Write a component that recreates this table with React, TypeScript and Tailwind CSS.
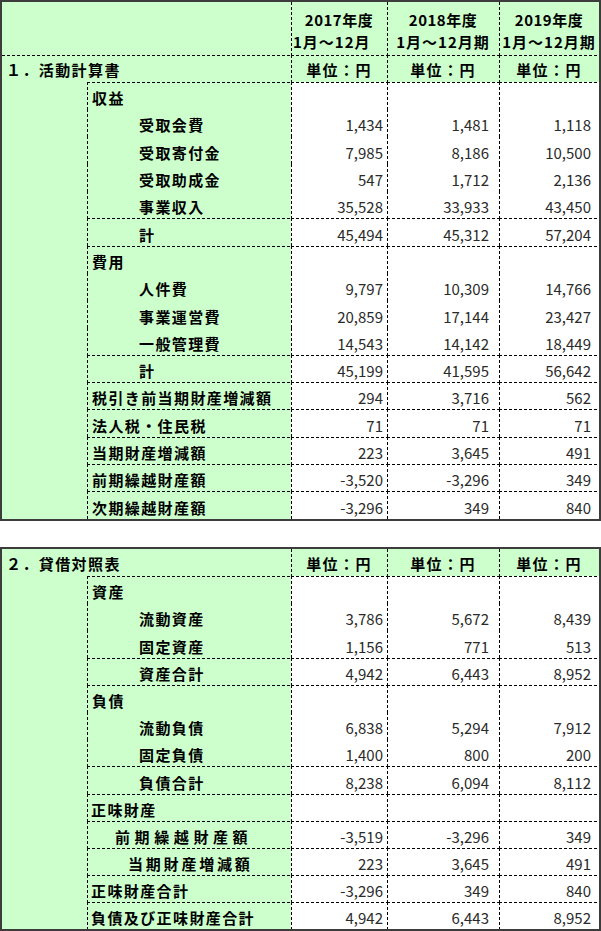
import React from 'react'

type Row = {
  label: string
  pad: string
  vals?: string[]
  line?: boolean
}

const activity: Row[] = [
  { label: '収益', pad: 'pl-[5px] tracking-[1.4px]', line: true },
  { label: '受取会費', pad: 'pl-[52px] tracking-[1.4px]', vals: ['1,434', '1,481', '1,118'] },
  { label: '受取寄付金', pad: 'pl-[52px] tracking-[1.4px]', vals: ['7,985', '8,186', '10,500'] },
  { label: '受取助成金', pad: 'pl-[52px] tracking-[1.4px]', vals: ['547', '1,712', '2,136'] },
  { label: '事業収入', pad: 'pl-[52px] tracking-[1.4px]', vals: ['35,528', '33,933', '43,450'] },
  { label: '計', pad: 'pl-[52px] tracking-[1.4px]', vals: ['45,494', '45,312', '57,204'], line: true },
  { label: '費用', pad: 'pl-[5px] tracking-[1.4px]', line: true },
  { label: '人件費', pad: 'pl-[52px] tracking-[1.4px]', vals: ['9,797', '10,309', '14,766'] },
  { label: '事業運営費', pad: 'pl-[52px] tracking-[1.4px]', vals: ['20,859', '17,144', '23,427'] },
  { label: '一般管理費', pad: 'pl-[52px] tracking-[1.4px]', vals: ['14,543', '14,142', '18,449'] },
  { label: '計', pad: 'pl-[52px] tracking-[1.4px]', vals: ['45,199', '41,595', '56,642'], line: true },
  { label: '税引き前当期財産増減額', pad: 'pl-[5px] tracking-[1.4px]', vals: ['294', '3,716', '562'], line: true },
  { label: '法人税・住民税', pad: 'pl-[5px] tracking-[1.4px]', vals: ['71', '71', '71'], line: true },
  { label: '当期財産増減額', pad: 'pl-[5px] tracking-[1.4px]', vals: ['223', '3,645', '491'], line: true },
  { label: '前期繰越財産額', pad: 'pl-[5px] tracking-[1.4px]', vals: ['-3,520', '-3,296', '349'], line: true },
  { label: '次期繰越財産額', pad: 'pl-[5px] tracking-[1.4px]', vals: ['-3,296', '349', '840'], line: true },
]

const balance: Row[] = [
  { label: '資産', pad: 'pl-[5px] tracking-[1.4px]', line: true },
  { label: '流動資産', pad: 'pl-[52px] tracking-[1.4px]', vals: ['3,786', '5,672', '8,439'] },
  { label: '固定資産', pad: 'pl-[52px] tracking-[1.4px]', vals: ['1,156', '771', '513'] },
  { label: '資産合計', pad: 'pl-[52px] tracking-[1.4px]', vals: ['4,942', '6,443', '8,952'], line: true },
  { label: '負債', pad: 'pl-[5px] tracking-[1.4px]', line: true },
  { label: '流動負債', pad: 'pl-[52px] tracking-[1.4px]', vals: ['6,838', '5,294', '7,912'] },
  { label: '固定負債', pad: 'pl-[52px] tracking-[1.4px]', vals: ['1,400', '800', '200'] },
  { label: '負債合計', pad: 'pl-[52px] tracking-[1.4px]', vals: ['8,238', '6,094', '8,112'], line: true },
  { label: '正味財産', pad: 'pl-[4px] tracking-[1.4px]', line: true },
  { label: '前期繰越財産額', pad: 'pl-[28px] tracking-[4.6px]', vals: ['-3,519', '-3,296', '349'], line: true },
  { label: '当期財産増減額', pad: 'pl-[41px] tracking-[2.8px]', vals: ['223', '3,645', '491'], line: true },
  { label: '正味財産合計', pad: 'pl-[4px] tracking-[1.4px]', vals: ['-3,296', '349', '840'], line: true },
  { label: '負債及び正味財産合計', pad: 'pl-[4px] tracking-[1.4px]', vals: ['4,942', '6,443', '8,952'], line: true },
]

// dashed cell edges drawn as repeating gradients (3px dash, 2px gap)
const greenL =
  '[background:linear-gradient(#000_60%,transparent_0)_left_top/1px_5px_repeat-y,#ccffcc]'
const greenLT =
  '[background:linear-gradient(#000_60%,transparent_0)_left_top/1px_5px_repeat-y,linear-gradient(90deg,#000_60%,transparent_0)_left_top/5px_1px_repeat-x,#ccffcc]'
const greenT =
  '[background:linear-gradient(90deg,#000_60%,transparent_0)_left_top/5px_1px_repeat-x,#ccffcc]'
const whiteL =
  '[background:linear-gradient(#000_60%,transparent_0)_left_top/1px_5px_repeat-y,#ffffff]'
const whiteLT =
  '[background:linear-gradient(#000_60%,transparent_0)_left_top/1px_5px_repeat-y,linear-gradient(90deg,#000_60%,transparent_0)_left_top/5px_1px_repeat-x,#ffffff]'
const green = 'bg-[#ccffcc]'
const valPad = ['pr-[4px]', 'pr-[10px]', 'pr-[8px]']

function BodyRows({ rows }: { rows: Row[] }) {
  return (
    <>
      {rows.map((r, i) => (
        <React.Fragment key={i}>
          <div
            className={`col-start-2 flex items-center pt-[4px] ${r.line ? greenLT : greenL} ${r.pad} font-bold whitespace-nowrap`}
          >
            {r.label}
          </div>
          {[0, 1, 2].map((c) => (
            <div
              key={c}
              className={`flex items-center justify-end pt-[4px] ${r.line ? whiteLT : whiteL} ${valPad[c]} font-normal text-[#2a2a2a]`}
            >
              {r.vals ? r.vals[c] : ''}
            </div>
          ))}
        </React.Fragment>
      ))}
    </>
  )
}

export default function App() {
  const years = ['2017年度', '2018年度', '2019年度']
  const terms = ['1月～12月', '1月～12月期', '1月～12月期']

  return (
    <div className="w-[601px] bg-white text-black text-[15px] leading-[15px] font-['Noto_Sans_CJK_JP','Noto_Sans',sans-serif]">
      {/* 1. 活動計算書 */}
      <div className="grid w-[601px] border-2 border-[#3c3c3c] grid-cols-[85px_204px_96px_112px_100px] grid-rows-[26px_27px_27px_27px_27px_28px_27px_27px_28px_27px_27px_28px_27px_27px_27px_28px_27px_27px_28px]">
        <div className={`col-span-2 row-span-2 ${green}`} />
        {years.map((y) => (
          <div key={y} className={`flex items-end justify-center pb-[1px] ${greenL} font-bold tracking-[0.5px]`}>
            {y}
          </div>
        ))}
        {terms.map((t, i) => (
          <div
            key={i}
            className={`flex items-center ${i === 0 ? 'justify-start pl-[2px]' : 'justify-center'} ${greenL} font-bold tracking-[1px] whitespace-nowrap`}
          >
            {t}
          </div>
        ))}
        <div className={`col-span-2 flex items-center pt-[2px] pl-[4px] ${greenT} font-bold tracking-[1.4px]`}>
          １．活動計算書
        </div>
        {[0, 1, 2].map((c) => (
          <div key={c} className={`flex items-center justify-center pt-[2px] ${greenLT} font-bold tracking-[1.4px]`}>
            単位：円
          </div>
        ))}
        <div className={`row-span-16 ${green}`} />
        <BodyRows rows={activity} />
      </div>

      {/* 2. 貸借対照表 */}
      <div className="mt-[26px] grid w-[601px] border-2 border-[#3c3c3c] grid-cols-[85px_204px_96px_112px_100px] grid-rows-[27px_27px_27px_28px_27px_27px_27px_27px_28px_27px_27px_27px_27px_27px]">
        <div className={`col-span-2 flex items-center pt-[2px] pl-[4px] ${green} font-bold tracking-[1.4px]`}>
          ２．貸借対照表
        </div>
        {[0, 1, 2].map((c) => (
          <div key={c} className={`flex items-center justify-center pt-[2px] ${greenL} font-bold tracking-[1.4px]`}>
            単位：円
          </div>
        ))}
        <div className={`row-span-13 ${green}`} />
        <BodyRows rows={balance} />
      </div>
    </div>
  )
}
